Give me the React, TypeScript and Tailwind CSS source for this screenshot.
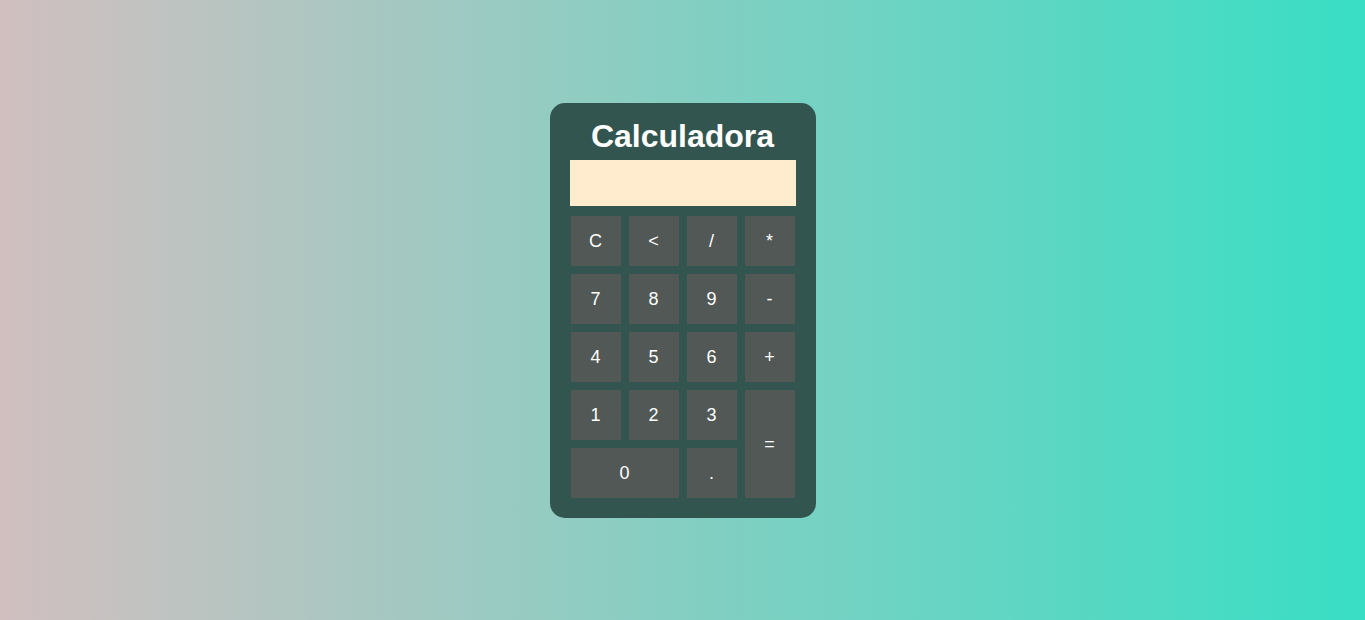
const KEYS = [
  { label: "C" },
  { label: "<" },
  { label: "/" },
  { label: "*" },
  { label: "7" },
  { label: "8" },
  { label: "9" },
  { label: "-" },
  { label: "4" },
  { label: "5" },
  { label: "6" },
  { label: "+" },
  { label: "1" },
  { label: "2" },
  { label: "3" },
  { label: "=", cls: "row-span-2" },
  { label: "0", cls: "col-span-2" },
  { label: "." },
];

export default function App() {
  return (
    <div className="flex h-[620px] w-full items-center justify-center bg-[linear-gradient(to_right,#d1bfc0,#38dec4)] font-['Liberation_Sans',Arial,sans-serif]">
      <div className="flex w-[266px] flex-col rounded-[15px] bg-[#325550] px-5 pt-[15px] pb-5">
        <h1 className="mb-[5px] text-center text-[32px] leading-[37px] font-bold text-white">Calculadora</h1>
        <div className="h-[46px] w-full bg-[#ffebcd]" />
        <div className="mt-[10px] grid grid-cols-[repeat(4,50px)] auto-rows-[50px] gap-2 px-px">
          {KEYS.map((k) => (
            <button
              key={k.label}
              type="button"
              className={`flex items-center justify-center bg-[#515855] pt-px text-[18px] text-white ${k.cls ?? ""}`}
            >
              {k.label}
            </button>
          ))}
        </div>
      </div>
    </div>
  );
}
